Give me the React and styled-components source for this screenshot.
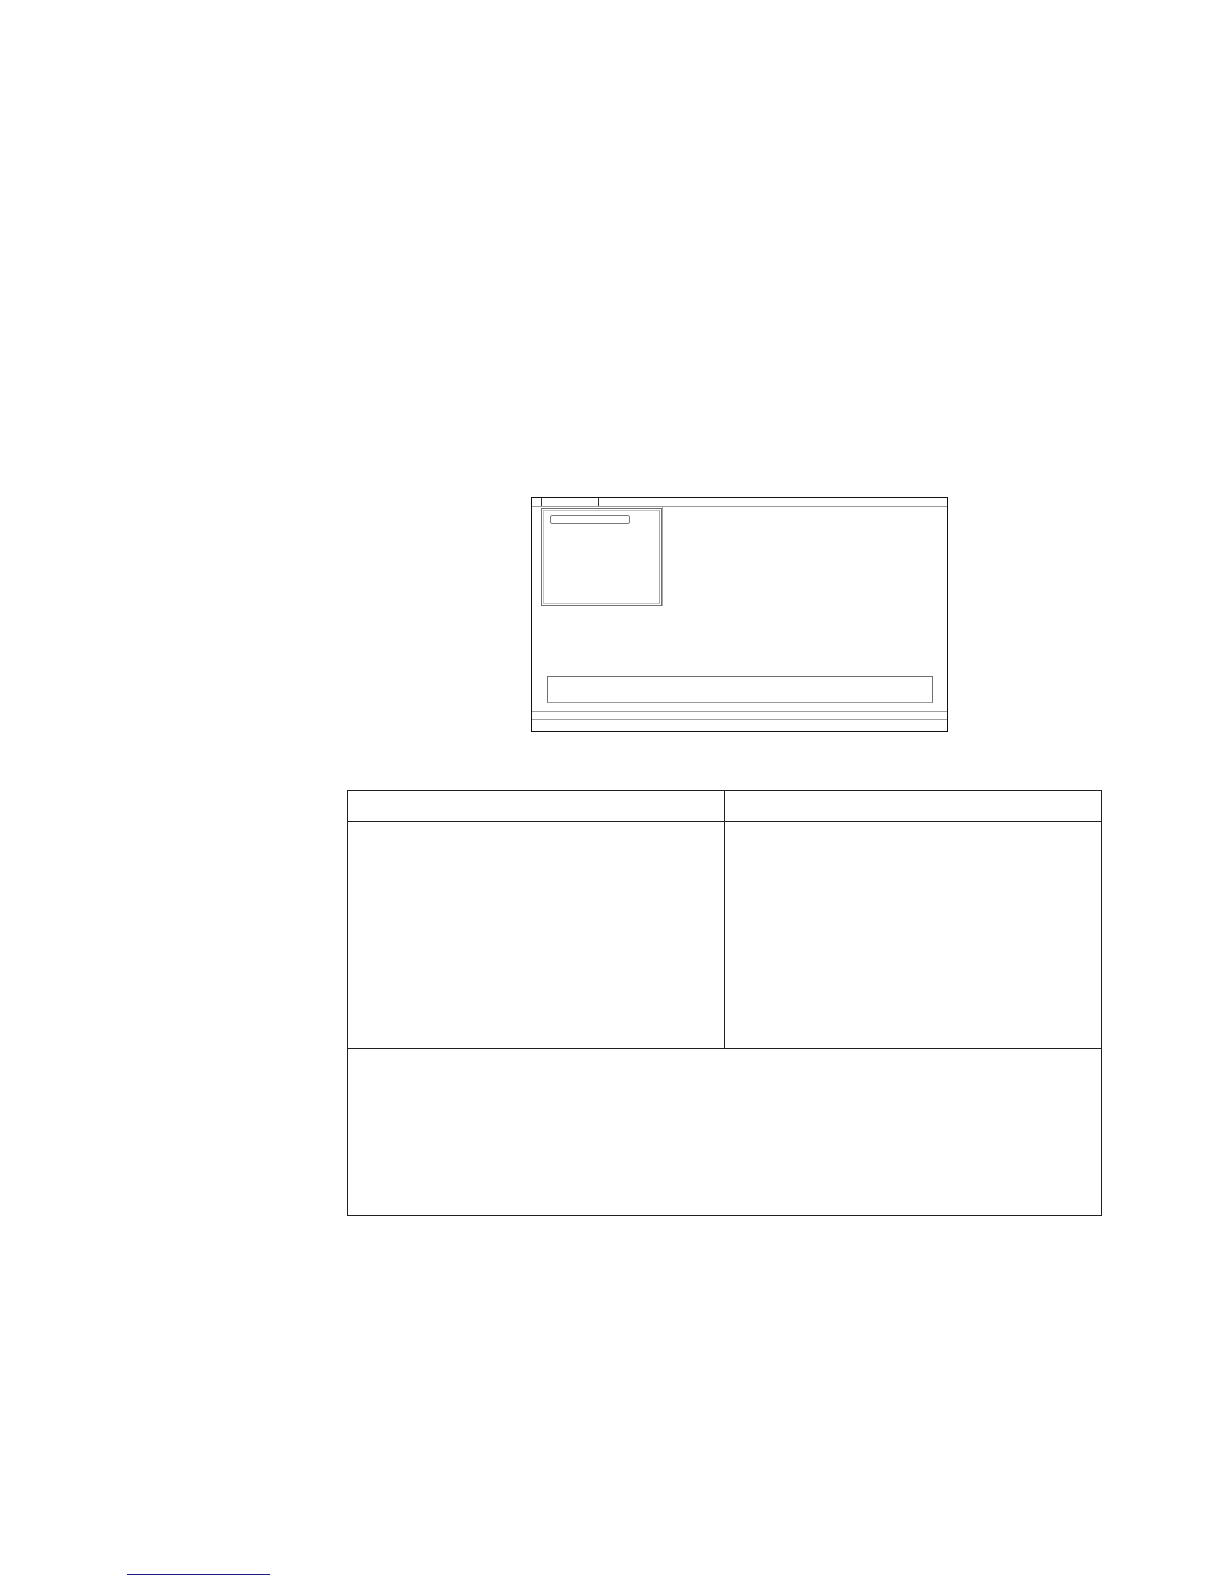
import React from "react";
import styled, { createGlobalStyle } from "styled-components";

const Global = createGlobalStyle`
  html, body { margin: 0; padding: 0; background: #fff; }
  body { font-family: "Liberation Sans", Arial, sans-serif; }
  * { box-sizing: border-box; }
`;

const Page = styled.div`
  width: 1224px;
  height: 1584px;
  display: flex;
  flex-direction: column;
  align-items: flex-start;
  overflow: hidden;
`;

const Dialog = styled.div`
  margin: 497px 0 0 531px;
  width: 417px;
  height: 235px;
  border: 1px solid #111;
  display: flex;
  flex-direction: column;
`;

const TabStrip = styled.div`
  height: 9px;
  display: flex;
  padding-left: 9px;
  border-bottom: 1px solid #9a9a9a;
`;

const Tab = styled.div`
  width: 58px;
  height: 100%;
  border-left: 1px solid #333;
  border-right: 1px solid #333;
`;

const Body = styled.div`
  display: flex;
  align-items: flex-start;
  height: 99px;
`;

const ListPanel = styled.div`
  margin: 1px 0 0 9px;
  width: 121px;
  height: 98px;
  border: 1px solid #6f6f6f;
  padding: 1px;
`;

const ListInner = styled.div`
  height: 100%;
  border: 1px solid #c4c4c4;
  border-right-color: #a8a8a8;
  padding: 4px 0 0 6px;
`;

const Field = styled.div`
  width: 80px;
  height: 9px;
  border: 1px solid #7a7a7a;
  border-radius: 2px;
`;

const RightPanel = styled.div`
  flex: 1;
  height: 99px;
  border-left: 1px solid #a8a8a8;
`;

const TextBox = styled.div`
  margin: 70px 14px 0 15px;
  height: 27px;
  border: 1px solid #6f6f6f;
  border-bottom-color: #9a9a9a;
`;

const StatusBar = styled.div`
  margin-top: 8px;
  height: 9px;
  border-top: 1px solid #a0a0a0;
  border-bottom: 1px solid #a0a0a0;
`;

const Table = styled.div`
  margin: 58px 0 0 347px;
  width: 755px;
  display: grid;
  grid-template-columns: 377px 1fr;
  grid-template-rows: 31px 227px 166px;
  border: 1px solid #231f20;
`;

const Cell = styled.div`
  border-bottom: ${(p) => (p.$last ? "none" : "1px solid #231f20")};
  border-right: ${(p) => (p.$divider ? "1px solid #231f20" : "none")};
  grid-column: ${(p) => (p.$full ? "1 / -1" : "auto")};
`;

const FooterLink = styled.a`
  display: block;
  margin: 358px 0 0 127px;
  width: 143px;
  height: 1px;
  border-bottom: 1px solid #1c1c8a;
`;

export default function App() {
  return (
    <>
      <Global />
      <Page>
        <Dialog>
          <TabStrip>
            <Tab />
          </TabStrip>
          <Body>
            <ListPanel>
              <ListInner>
                <Field />
              </ListInner>
            </ListPanel>
            <RightPanel />
          </Body>
          <TextBox />
          <StatusBar />
        </Dialog>
        <Table>
          <Cell $divider />
          <Cell />
          <Cell $divider />
          <Cell />
          <Cell $full $last />
        </Table>
        <FooterLink href="#" />
      </Page>
    </>
  );
}
